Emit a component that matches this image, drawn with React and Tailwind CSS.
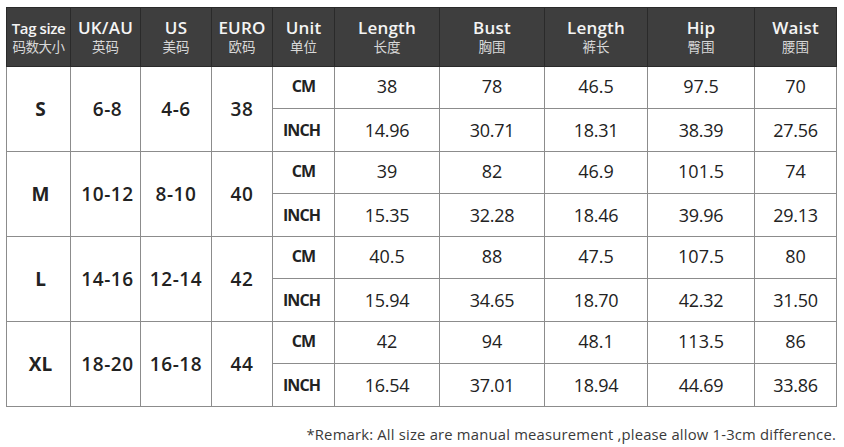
import React from "react";

const headers = [
  ["Tag size", "码数大小"],
  ["UK/AU", "英码"],
  ["US", "美码"],
  ["EURO", "欧码"],
  ["Unit", "单位"],
  ["Length", "长度"],
  ["Bust", "胸围"],
  ["Length", "裤长"],
  ["Hip", "臀围"],
  ["Waist", "腰围"],
];

const widths = [64, 70, 71, 61, 62, 105, 105, 103, 107, 82];

const rows = [
  { s: "S", uk: "6-8", us: "4-6", eu: "38", cm: ["38", "78", "46.5", "97.5", "70"], inch: ["14.96", "30.71", "18.31", "38.39", "27.56"] },
  { s: "M", uk: "10-12", us: "8-10", eu: "40", cm: ["39", "82", "46.9", "101.5", "74"], inch: ["15.35", "32.28", "18.46", "39.96", "29.13"] },
  { s: "L", uk: "14-16", us: "12-14", eu: "42", cm: ["40.5", "88", "47.5", "107.5", "80"], inch: ["15.94", "34.65", "18.70", "42.32", "31.50"] },
  { s: "XL", uk: "18-20", us: "16-18", eu: "44", cm: ["42", "94", "48.1", "113.5", "86"], inch: ["16.54", "37.01", "18.94", "44.69", "33.86"] },
];

const font = { fontFamily: '"Open Sans", "Noto Sans CJK SC", sans-serif' };

export default function App() {
  return (
    <div className="w-[844px] h-[447px] bg-white" style={font}>
      <div className="pt-[7px] pl-[6px]">
        <table className="table-fixed border-collapse w-[830px]">
          <colgroup>
            {widths.map((w, i) => (
              <col key={i} style={{ width: w }} />
            ))}
          </colgroup>
          <thead>
            <tr className="h-[59px] bg-[#3e3e3e]">
              {headers.map(([en, zh], i) => (
                <th
                  key={i}
                  className="border border-[#2a2a2a] font-normal text-center align-middle p-0"
                >
                  <div className={`${i === 0 ? "text-[15px] tracking-[-0.4px]" : "text-[17px] tracking-[0.2px]"} leading-[20px] text-[#f4f4f4] font-semibold`}>
                    {en}
                  </div>
                  <div className={`${i === 0 ? "text-[13.5px] tracking-[-0.5px]" : "text-[13.5px]"} leading-[18px] text-[#d8d8d8]`}>
                    {zh}
                  </div>
                </th>
              ))}
            </tr>
          </thead>
          <tbody className="text-[#222]">
            {rows.map((r, ri) => (
              <React.Fragment key={ri}>
                <tr className="h-[42px]">
                  <td rowSpan={2} className="border border-[#8c8c8c] text-center font-bold text-[19px] pl-[4px]">{r.s}</td>
                  <td rowSpan={2} className="border border-[#8c8c8c] text-center font-semibold text-[19px] tracking-[0.6px] pl-[4px]">{r.uk}</td>
                  <td rowSpan={2} className="border border-[#8c8c8c] text-center font-semibold text-[19px] tracking-[0.6px]">{r.us}</td>
                  <td rowSpan={2} className="border border-[#8c8c8c] text-center font-semibold text-[19px] tracking-[0.6px]">{r.eu}</td>
                  <td className="border border-[#8c8c8c] text-center font-bold text-[16px] tracking-[-1px] pb-[4px]">CM</td>
                  {r.cm.map((v, i) => (
                    <td key={i} className="border border-[#8c8c8c] text-center text-[18px] pb-[2px]">{v}</td>
                  ))}
                </tr>
                <tr className="h-[43px]">
                  <td className="border border-[#8c8c8c] text-center font-bold text-[16px] tracking-[-0.9px] pr-[4px]">INCH</td>
                  {r.inch.map((v, i) => (
                    <td key={i} className="border border-[#8c8c8c] text-center text-[18px] tracking-[-0.3px]">{v}</td>
                  ))}
                </tr>
              </React.Fragment>
            ))}
          </tbody>
        </table>
      </div>
      <div className="w-[836px] text-right text-[14.8px] text-[#3a3a3a] mt-[17px] leading-[20px] tracking-[0.2px]">
        *Remark: All size are manual measurement ,please allow 1-3cm difference.
      </div>
    </div>
  );
}
